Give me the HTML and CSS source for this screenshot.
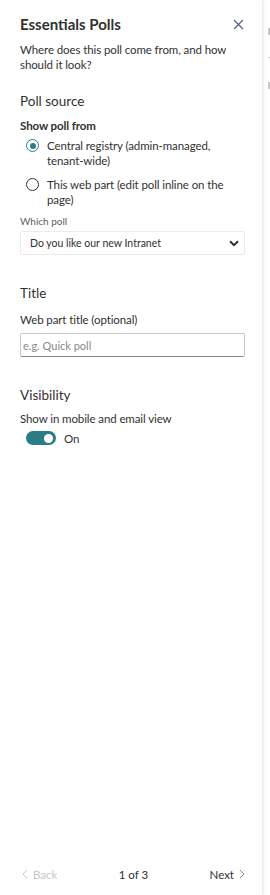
FILE: index.html
```html
<!DOCTYPE html>
<html lang="en">
<head>
    <meta charset="UTF-8">
    <meta name="viewport" content="width=device-width, initial-scale=1.0">
    <title>Essentials Polls</title>
    <link rel="stylesheet" href="styles.css">
</head>
<body>

    <div class="page">
        <div class="panel">
            <div class="panel-header">
                <h1 class="panel-title">Essentials Polls</h1>
                <button class="close-btn" aria-label="Close">
                    <svg width="11" height="11" viewBox="0 0 11 11"><path d="M1 1 L10 10 M10 1 L1 10" stroke="#4a5d7e" stroke-width="1.1" fill="none"/></svg>
                </button>
            </div>
            <p class="panel-desc">Where does this poll come from, and how should it look?</p>

            <div class="group">
                <h2 class="group-title">Poll source</h2>
                <div class="field-label strong">Show poll from</div>
                <label class="radio checked">
                    <span class="radio-dot"></span>
                    <span>Central registry (admin-managed, tenant-wide)</span>
                </label>
                <label class="radio">
                    <span class="radio-dot"></span>
                    <span>This web part (edit poll inline on the page)</span>
                </label>
                <div class="small-label">Which poll</div>
                <div class="select">
                    <span>Do you like our new Intranet</span>
                    <svg width="10" height="7" viewBox="0 0 10 7"><path d="M1 1.2 L5 5.2 L9 1.2" stroke="#323130" stroke-width="2" fill="none"/></svg>
                </div>
            </div>

            <div class="group">
                <h2 class="group-title">Title</h2>
                <div class="field-label">Web part title (optional)</div>
                <input class="text-input" type="text" placeholder="e.g. Quick poll">
            </div>

            <div class="group visibility">
                <h2 class="group-title">Visibility</h2>
                <div class="field-label">Show in mobile and email view</div>
                <div class="toggle-row">
                    <span class="toggle"><span class="knob"></span></span>
                    <span>On</span>
                </div>
            </div>

            <div class="panel-footer">
                <span class="nav disabled">
                    <svg width="6" height="10" viewBox="0 0 6 10"><path d="M5 1 L1 5 L5 9" stroke="#c8c6c4" stroke-width="1" fill="none"/></svg>
                    Back
                </span>
                <span class="pager">1 of 3</span>
                <span class="nav">
                    Next
                    <svg width="6" height="10" viewBox="0 0 6 10"><path d="M1 1 L5 5 L1 9" stroke="#8a8886" stroke-width="1" fill="none"/></svg>
                </span>
            </div>
        </div>

        <div class="behind">
            <span class="mark tall"></span>
            <span class="mark dot"></span>
            <span class="mark tall"></span>
        </div>
    </div>

</body>
</html>
```

FILE: styles.css
```css
body {
    margin: 0;
    font-family: "Segoe UI", Lato, sans-serif;
    color: #323130;
    background: #fff;
}

.page {
    display: flex;
    height: 895px;
    overflow: hidden;
}

.panel {
    width: 262px;
    flex-shrink: 0;
    height: 895px;
    box-sizing: border-box;
    padding: 13px 17px 0 20px;
    display: flex;
    flex-direction: column;
    background: #fff;
    box-shadow: 1px 0 3px rgba(0, 0, 0, 0.12);
}

.panel-header {
    display: flex;
    justify-content: space-between;
    align-items: center;
}

.panel-title {
    margin: 0;
    font-size: 15px;
    font-weight: 700;
    line-height: 22px;
}

.close-btn {
    border: none;
    background: none;
    padding: 0;
    margin-right: 1px;
    display: flex;
}

.panel-desc {
    margin: 7px 0 0;
    font-size: 11.5px;
    letter-spacing: -0.1px;
    line-height: 15px;
}

.group {
    margin-top: 19px;
}

.group + .group {
    margin-top: 28px;
}

.group-title {
    margin: 0 0 7px;
    font-size: 13.5px;
    font-weight: 400;
    line-height: 20px;
}

.field-label {
    font-size: 11.5px;
    letter-spacing: -0.1px;
    line-height: 16px;
    margin-bottom: 6px;
}

.field-label.strong {
    font-weight: 700;
    margin-bottom: 4px;
}

.group + .group .group-title {
    margin-bottom: 9px;
}

.group + .group .field-label {
    margin-bottom: 5px;
}

.group.visibility .group-title {
    margin-bottom: 6px;
}

.group.visibility .field-label {
    margin-bottom: 3px;
}

.radio {
    display: flex;
    align-items: flex-start;
    gap: 8px;
    padding-left: 6px;
    font-size: 11.5px;
    letter-spacing: -0.1px;
    line-height: 15px;
    margin-bottom: 9px;
}

.radio-dot {
    width: 13px;
    height: 13px;
    border: 1px solid #323130;
    border-radius: 50%;
    flex-shrink: 0;
    margin-top: 1px;
    box-sizing: border-box;
    position: relative;
}

.radio.checked .radio-dot {
    border-color: #2b7d85;
}

.radio.checked .radio-dot::after {
    content: "";
    position: absolute;
    left: 2.5px;
    top: 2.5px;
    width: 6px;
    height: 6px;
    border-radius: 50%;
    background: #2b7d85;
}

.small-label {
    font-size: 10px;
    color: #605e5c;
    line-height: 14px;
    margin-top: -2px;
    margin-bottom: 3px;
}

.select {
    display: flex;
    justify-content: space-between;
    align-items: center;
    height: 24px;
    box-sizing: border-box;
    padding: 0 5px 0 9px;
    border: 1px solid #edebe9;
    border-radius: 2px;
    font-size: 10.5px;
}

.text-input {
    display: block;
    width: 100%;
    height: 24px;
    box-sizing: border-box;
    padding: 0 2px;
    border: 1px solid #c8c6c4;
    border-bottom-color: #8a8886;
    border-radius: 2px;
    font-family: inherit;
    font-size: 11px;
    color: #323130;
    outline: none;
}

.text-input::placeholder {
    color: #8a8886;
}

.toggle-row {
    display: flex;
    align-items: center;
    gap: 8px;
    padding-left: 6px;
    font-size: 11.5px;
    height: 16px;
}

.toggle {
    width: 30px;
    height: 14px;
    border-radius: 8px;
    background: #2b7d85;
    display: flex;
    align-items: center;
    justify-content: flex-end;
    padding: 0 3px;
    box-sizing: border-box;
}

.knob {
    width: 9px;
    height: 9px;
    border-radius: 50%;
    background: #fff;
}

.panel-footer {
    margin-top: auto;
    display: flex;
    justify-content: space-between;
    align-items: center;
    height: 42px;
    padding: 0 0 0 2px;
    font-size: 11.5px;
}

.nav {
    display: flex;
    align-items: center;
    gap: 5px;
}

.nav.disabled {
    color: #c8c6c4;
}

.behind {
    display: flex;
    flex-direction: column;
    padding: 28px 0 0 6px;
}

.mark {
    background: #c8c6c4;
    width: 2px;
}

.mark.tall {
    height: 7px;
}

.mark.dot {
    height: 1px;
    margin: 22px 0 24px;
}
```
